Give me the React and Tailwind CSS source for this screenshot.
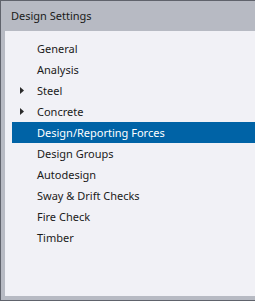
import React from "react";

const items = [
  { label: "General" },
  { label: "Analysis" },
  { label: "Steel", arrow: true },
  { label: "Concrete", arrow: true },
  { label: "Design/Reporting Forces", selected: true },
  { label: "Design Groups" },
  { label: "Autodesign" },
  { label: "Sway & Drift Checks" },
  { label: "Fire Check" },
  { label: "Timber" },
];

export default function App() {
  return (
    <div
      className="w-[255px] h-[301px] bg-[#b7bac3] border-t border-l border-b border-[#60636c] flex flex-col text-[11px] text-[#1a1a1a]"
      style={{ fontFamily: '"Noto Sans", sans-serif' }}
    >
      <div className="h-[30px] shrink-0 pl-[10px] flex items-center">Design Settings</div>
      <div className="ml-[4px] mb-[4px] flex-1 bg-[#f1f1f6] pt-[7px] pl-[7px]">
        {items.map((it) => (
          <div
            key={it.label}
            className={
              "h-[21px] flex items-center relative pl-[25px] " +
              (it.selected ? "bg-[#0063a6] text-white" : "")
            }
          >
            {it.arrow && (
              <svg className="absolute left-[8px] top-[7px]" width="4" height="7" viewBox="0 0 4 7">
                <path d="M0 0 L4 3.5 L0 7 Z" fill="#2b2b2b" />
              </svg>
            )}
            <span className="leading-none">{it.label}</span>
          </div>
        ))}
      </div>
    </div>
  );
}
